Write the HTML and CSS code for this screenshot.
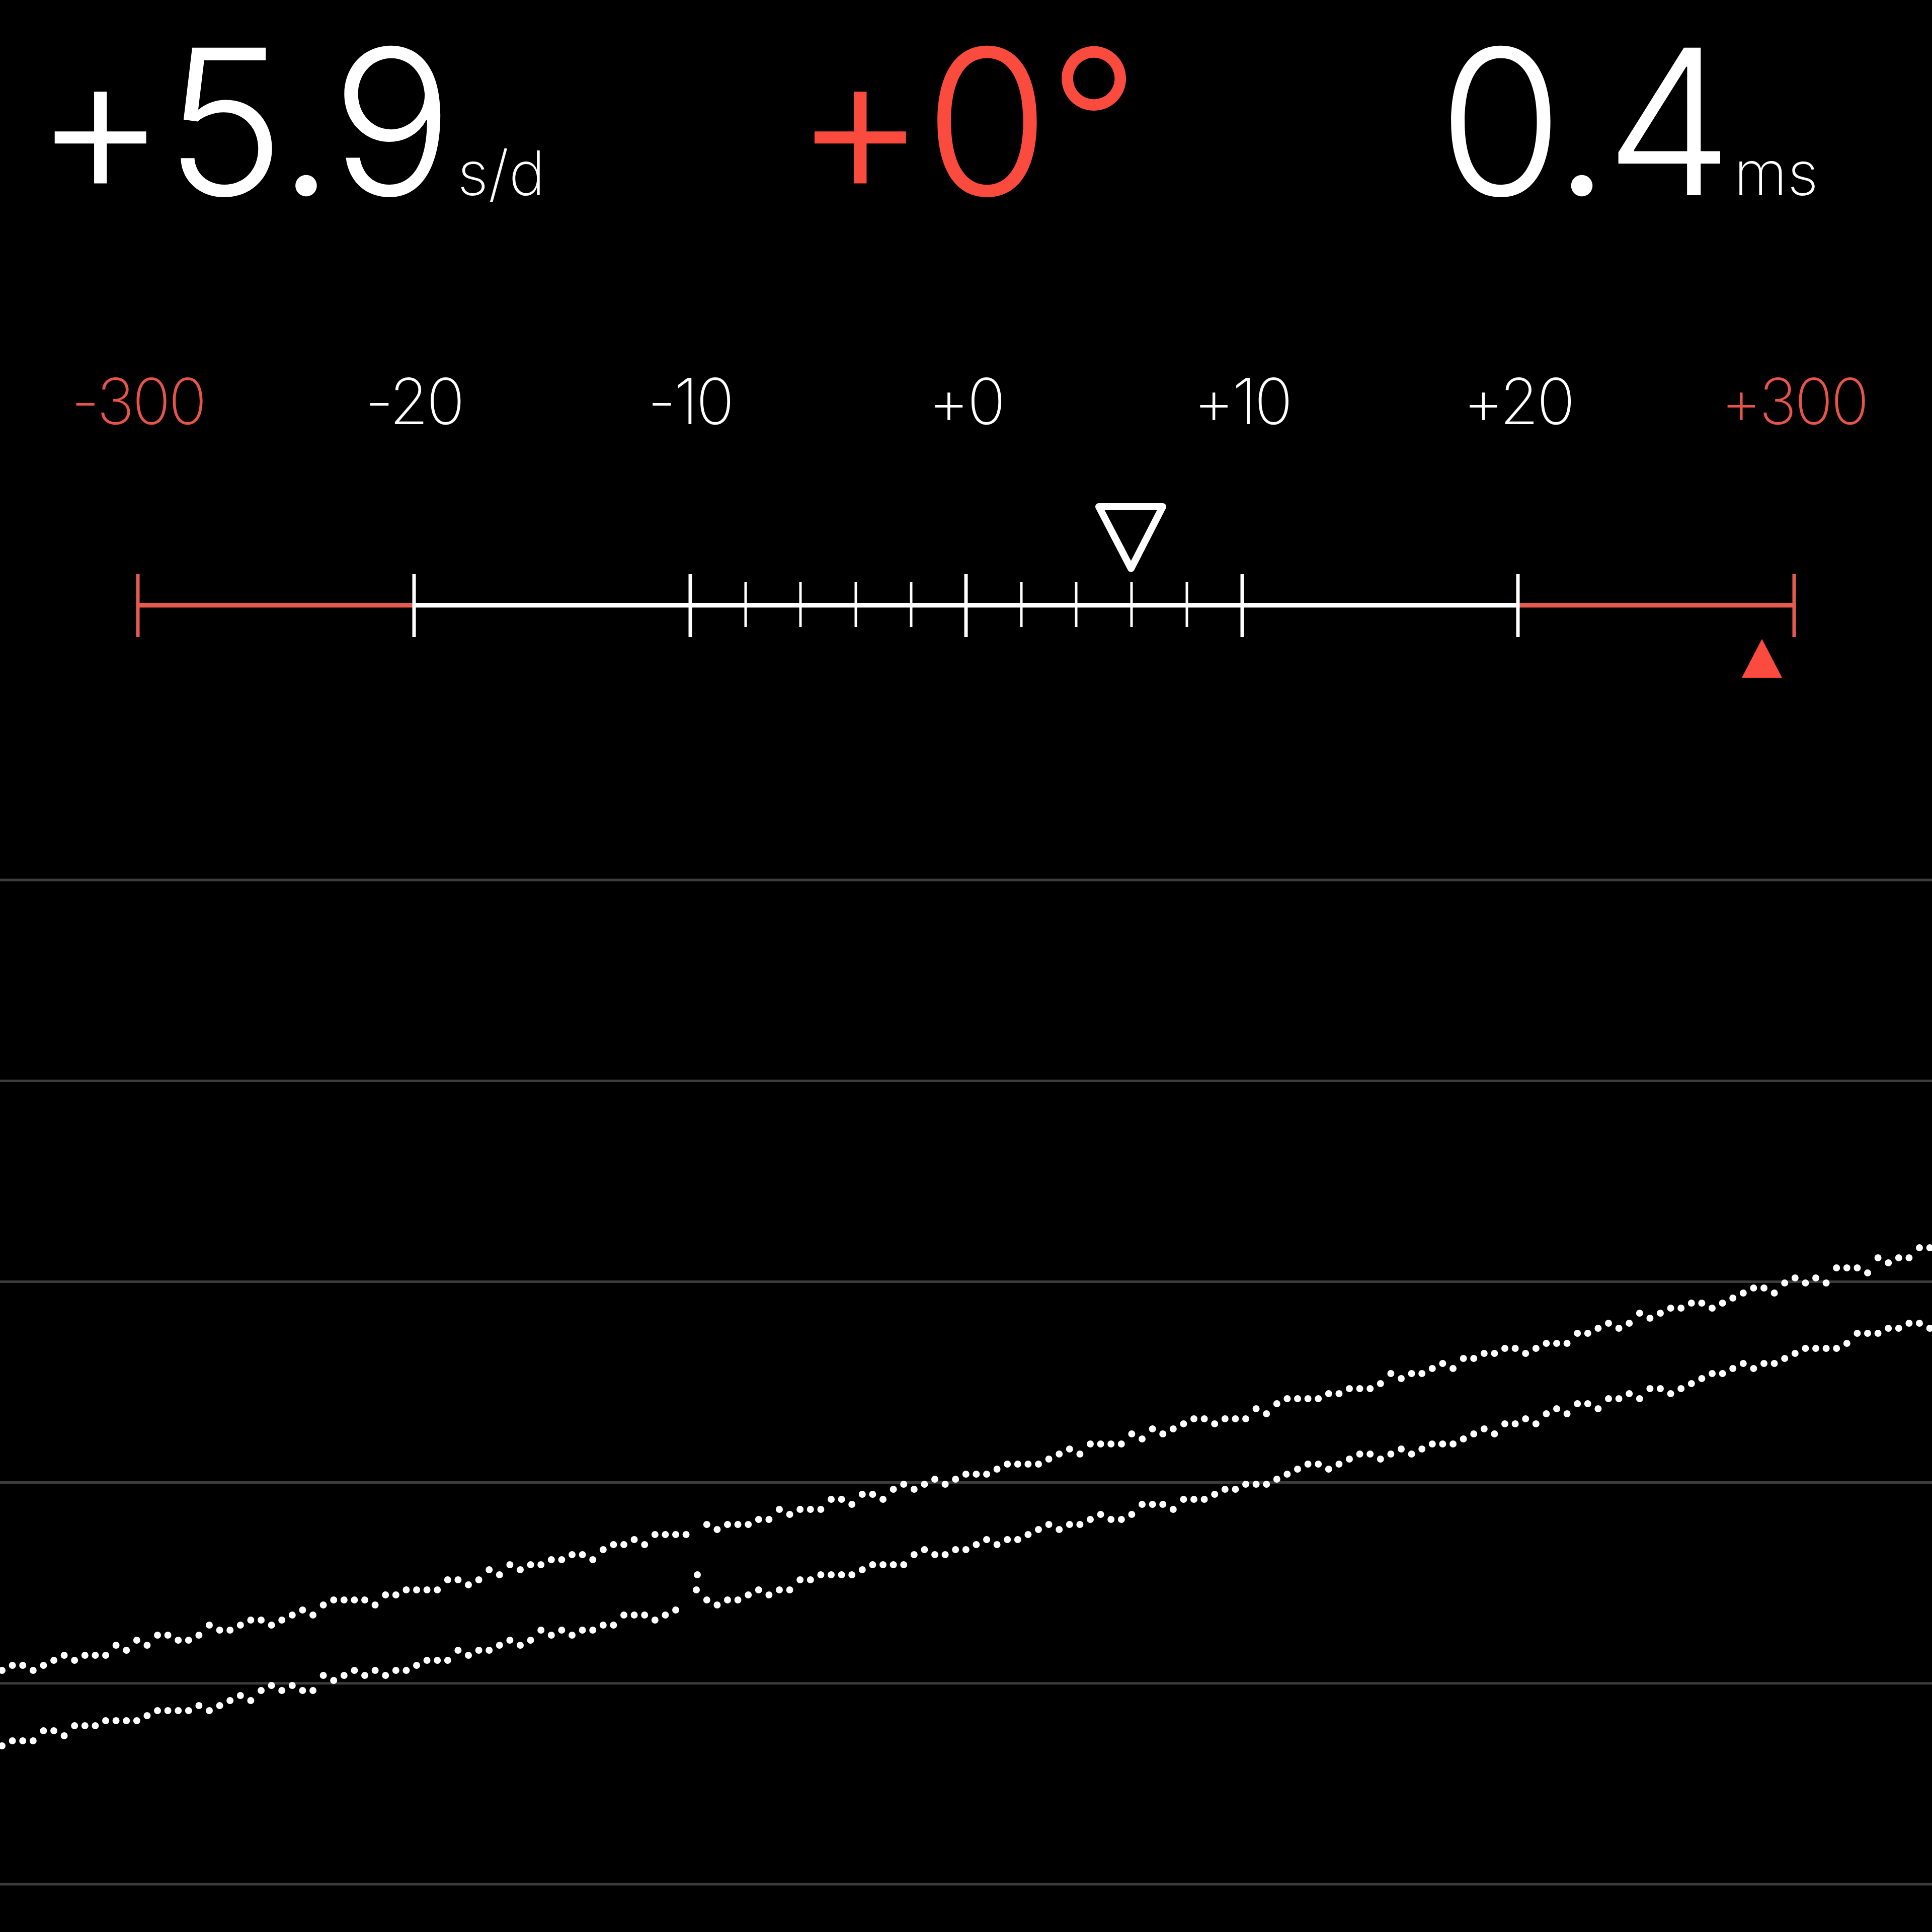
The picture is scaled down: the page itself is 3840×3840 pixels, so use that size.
FILE: index.html
```html
<!DOCTYPE html>
<html lang="en">
  <head>
    <meta charset="UTF-8" />
    <title>Timegrapher</title>
    <link rel="stylesheet" href="styles.css">
  </head>
  <body>
    <div class="readouts">
      <div class="readout readout-rate">
        <span class="value">+5.9</span><span class="unit">s/d</span>
      </div>
      <div class="readout readout-lift">
        <span class="value">+0°</span>
      </div>
      <div class="readout readout-beat">
        <span class="value">0.4</span><span class="unit">ms</span>
      </div>
    </div>

    <div class="labels">
      <span class="label warn">-300</span>
      <span class="label">-20</span>
      <span class="label">-10</span>
      <span class="label">+0</span>
      <span class="label">+10</span>
      <span class="label">+20</span>
      <span class="label warn">+300</span>
    </div>

    <svg class="gauge" width="3840" height="538" viewBox="0 0 3840 538">
      <line class="bar-red" x1="274" y1="341" x2="823" y2="341" />
      <line class="bar" x1="823" y1="341" x2="3017" y2="341" />
      <line class="bar-red" x1="3017" y1="341" x2="3566" y2="341" />

      <line class="tick-red" x1="274" y1="279" x2="274" y2="404" />
      <line class="tick" x1="823" y1="279" x2="823" y2="404" />
      <line class="tick" x1="1372" y1="279" x2="1372" y2="404" />
      <line class="tick" x1="1920" y1="279" x2="1920" y2="404" />
      <line class="tick" x1="2469" y1="279" x2="2469" y2="404" />
      <line class="tick" x1="3017" y1="279" x2="3017" y2="404" />
      <line class="tick-red" x1="3566" y1="279" x2="3566" y2="404" />

      <line class="minor" x1="1482" y1="295" x2="1482" y2="384" />
      <line class="minor" x1="1591" y1="295" x2="1591" y2="384" />
      <line class="minor" x1="1701" y1="295" x2="1701" y2="384" />
      <line class="minor" x1="1811" y1="295" x2="1811" y2="384" />
      <line class="minor" x1="2030" y1="295" x2="2030" y2="384" />
      <line class="minor" x1="2139" y1="295" x2="2139" y2="384" />
      <line class="minor" x1="2249" y1="295" x2="2249" y2="384" />
      <line class="minor" x1="2359" y1="295" x2="2359" y2="384" />

      <!-- current rate -->
      <polygon class="pointer" points="2184,145 2311,145 2248,268" />
      <!-- beat error -->
      <polygon class="pointer-red" points="3462,485 3542,485 3502,408" />
    </svg>

    <svg class="chart" id="chart" width="3840" height="2440" viewBox="0 0 3840 2440">
      <g id="grid"></g>
      <g id="dots"></g>
    </svg>

    <script>
      const svgNS = "http://www.w3.org/2000/svg";
      const OFFSET = 1400; // chart top on the page

      // grid lines
      const grid = document.getElementById("grid");
      for (let i = 0; i < 6; i++) {
        const y = 1749 + i * 399.2 - OFFSET;
        const line = document.createElementNS(svgNS, "line");
        line.setAttribute("x1", 0);
        line.setAttribute("x2", 3840);
        line.setAttribute("y1", y);
        line.setAttribute("y2", y);
        line.setAttribute("class", "grid-line");
        grid.appendChild(line);
      }

      // simple seeded random so the trace is the same every time
      let seed = 12345;
      function rand() {
        seed = (seed * 1103515245 + 12345) % 2147483648;
        return seed / 2147483648;
      }

      const dots = document.getElementById("dots");
      function addDot(x, y) {
        const c = document.createElementNS(svgNS, "circle");
        c.setAttribute("cx", x.toFixed(1));
        c.setAttribute("cy", (y - OFFSET).toFixed(1));
        c.setAttribute("r", 7);
        c.setAttribute("class", "dot");
        dots.appendChild(c);
      }

      const traces = [
        { c: 3320, b: -0.18724, a: -8.0e-6, gapFrom: 1365, gapTo: 1400 },
        { c: 3465, b: -0.1859, a: -8.41e-6, gapFrom: 1356, gapTo: 1394 }
      ];

      traces.forEach(t => {
        for (let x = 4; x < 3845; x += 20.6) {
          if (x > t.gapFrom && x < t.gapTo) continue;
          const trend = t.c + t.b * x + t.a * x * x;
          const noise = (rand() - 0.5) * 22;
          const y = Math.round((trend + noise) / 10) * 10;
          addDot(x, y);
        }
      });

      // stray ticks in the gap
      addDot(1384, 3160);
      addDot(1386, 3130);
    </script>
  </body>
</html>
```

FILE: styles.css
```css
html,
body {
  margin: 0;
  padding: 0;
}
body {
  width: 3840px;
  height: 3840px;
  background: #000000;
  color: #ffffff;
  font-family: "Inter", "Roboto", "Liberation Sans", sans-serif;
  font-weight: 200;
  overflow: hidden;
}
.readouts {
  display: grid;
  grid-template-columns: 1fr auto 1fr;
  align-items: baseline;
  height: 734px;
  box-sizing: border-box;
  padding: 0 68px;
}
.readout {
  display: flex;
  align-items: baseline;
}
.readout-lift {
  color: #fb4b3e;
  justify-self: center;
}
.readout-beat {
  justify-self: end;
  margin-right: 158px;
}
.readout-beat .value {
  letter-spacing: -10px;
}
.value {
  font-size: 403px;
  font-weight: 300;
  line-height: 1.2;
  letter-spacing: -4px;
}
.unit {
  font-size: 122px;
  line-height: 1.2;
  margin-left: 12px;
}
.labels {
  display: flex;
  height: 128px;
}
.label {
  flex: 1;
  text-align: center;
  font-size: 126px;
  line-height: 1;
  letter-spacing: -4px;
  color: #ffffff;
}
.label.warn {
  color: #e8544a;
}
.gauge,
.chart {
  display: block;
}
.bar {
  stroke: #ffffff;
  stroke-width: 9;
}
.bar-red {
  stroke: #e85a50;
  stroke-width: 9;
}
.tick {
  stroke: #ffffff;
  stroke-width: 7;
}
.tick-red {
  stroke: #e85a50;
  stroke-width: 7;
}
.minor {
  stroke: #ffffff;
  stroke-width: 5;
}
.pointer {
  fill: none;
  stroke: #ffffff;
  stroke-width: 14;
  stroke-linejoin: round;
}
.pointer-red {
  fill: #fb4b3e;
}
.grid-line {
  stroke: #3c3c3c;
  stroke-width: 5;
}
.dot {
  fill: #ffffff;
}
```
